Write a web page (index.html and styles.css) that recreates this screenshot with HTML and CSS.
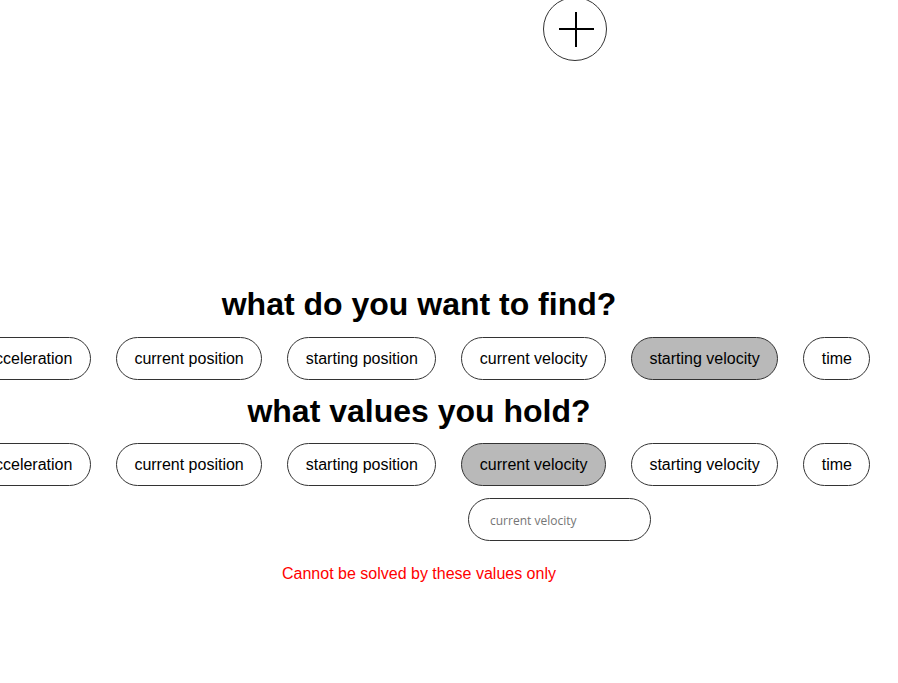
FILE: index.html
```html
<!DOCTYPE html>
<html>
<head>
<meta charset="utf-8">
<link rel="stylesheet" href="styles.css">
</head>
<body>
<button class="fab" aria-label="add">
  <svg width="64" height="64" viewBox="0 0 64 64"><path d="M16 32H51M33 15V50" stroke="#000" stroke-width="2" fill="none"/></svg>
</button>
<main class="main">
  <h1 class="title">what do you want to find?</h1>
  <div class="pills">
    <span class="pill">acceleration</span>
    <span class="pill">current position</span>
    <span class="pill">starting position</span>
    <span class="pill">current velocity</span>
    <span class="pill selected">starting velocity</span>
    <span class="pill">time</span>
  </div>
  <h1 class="title title-2">what values you hold?</h1>
  <div class="pills">
    <span class="pill">acceleration</span>
    <span class="pill">current position</span>
    <span class="pill">starting position</span>
    <span class="pill selected">current velocity</span>
    <span class="pill">starting velocity</span>
    <span class="pill">time</span>
  </div>
  <div class="inputs">
    <input class="value-input" type="text" placeholder="current velocity">
  </div>
  <p class="error">Cannot be solved by these values only</p>
</main>
</body>
</html>
```
FILE: styles.css
```css
html, body {
  margin: 0;
  padding: 0;
  background: #fff;
  overflow: hidden;
}
body {
  font-family: "Liberation Sans", Arial, sans-serif;
  color: #000;
  width: 898px;
  height: 683px;
  position: relative;
}
.fab {
  position: absolute;
  left: 543px;
  top: -3px;
  width: 64px;
  height: 64px;
  padding: 0;
  border: 1px solid #333;
  border-radius: 50%;
  background: #fff;
  box-sizing: border-box;
}
.fab svg {
  position: absolute;
  left: -1px;
  top: -1px;
}
.main {
  width: 838px;
  padding-top: 286px;
  display: flex;
  flex-direction: column;
  align-items: center;
}
.title {
  margin: 0;
  font-size: 32px;
  font-weight: bold;
  line-height: 37px;
  white-space: nowrap;
}
.title-2 {
  margin-top: 13px;
}
.pills {
  display: flex;
  justify-content: center;
  gap: 25px;
  margin-top: 14px;
  width: 838px;
}
.title-2 + .pills {
  margin-top: 13px;
}
.pill {
  flex: none;
  box-sizing: border-box;
  height: 43px;
  padding: 0 17.5px;
  border: 1px solid #333;
  border-radius: 22px;
  font-size: 16px;
  line-height: 41px;
  white-space: nowrap;
  background: #fff;
}
.pill.selected {
  background: #b9b9b9;
}
.inputs {
  align-self: stretch;
  margin-top: 12px;
  padding-left: 468px;
}
.value-input {
  box-sizing: border-box;
  display: block;
  width: 183px;
  height: 43px;
  margin: 0;
  padding: 1px 0 0 21px;
  border: 1px solid #333;
  border-radius: 22px;
  font-family: "Open Sans", sans-serif;
  font-size: 12px;
  outline: none;
}
.value-input::placeholder {
  color: #757575;
}
.error {
  margin: 24px 0 0;
  color: #f00;
  font-size: 16px;
  line-height: 18px;
}
```
